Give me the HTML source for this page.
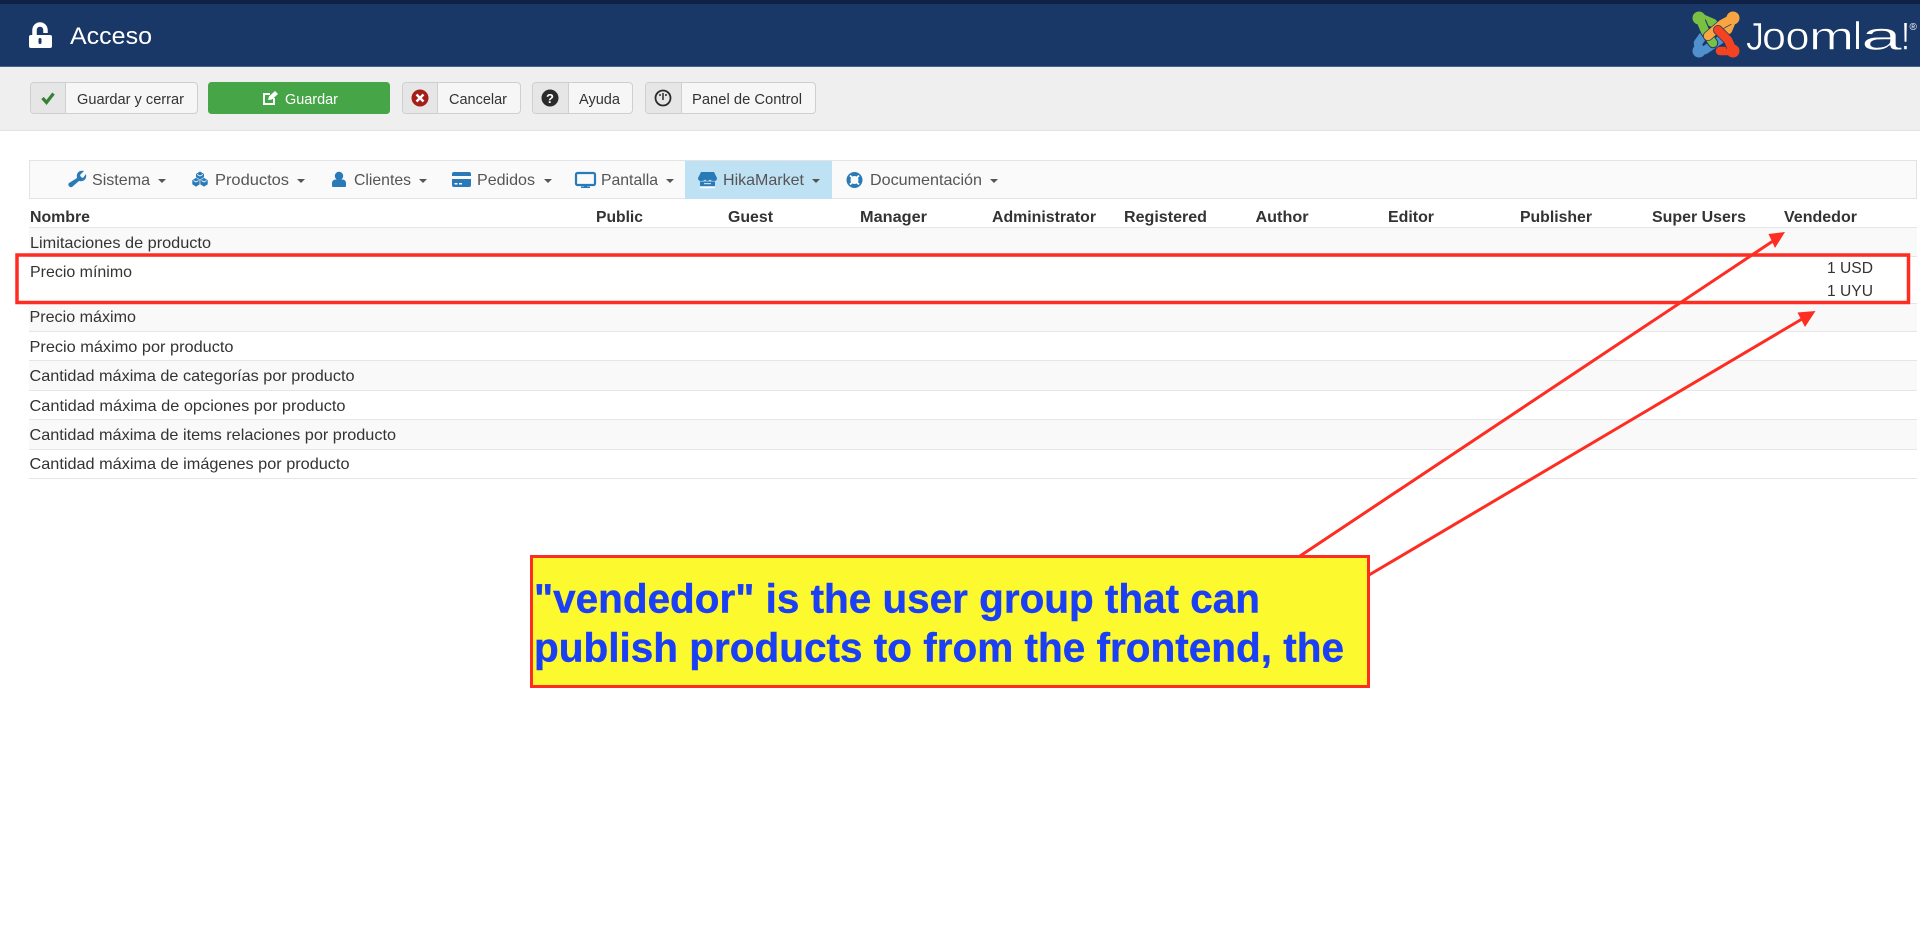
<!DOCTYPE html>
<html lang="es"><head><meta charset="utf-8"><title>Acceso</title>
<style>
html,body{margin:0;padding:0;background:#fff;width:1920px;height:925px;overflow:hidden}
svg{display:block;position:absolute;left:0;top:0}
text{font-family:"Liberation Sans",Arial,sans-serif}
.t{font-size:15.9px;fill:#333}
.h{font-size:15.9px;fill:#333;font-weight:bold}
.n{font-size:15.9px;fill:#555}
.b{font-size:14.6px;fill:#333}
.z{fill:#f9f9f9}
.l{fill:#e6e6e6}
.i{fill:#2a7ab8}
.c{fill:#555}
.btn{fill:#f6f6f6;stroke:#cfcfcf}
.ic{fill:#e6e6e6}
.j{font-size:39px;fill:#fff;stroke:#1a3867;stroke-width:.6}
</style></head><body>
<svg width="1920" height="925" viewBox="0 0 1920 925" xmlns="http://www.w3.org/2000/svg">
<!-- header -->
<rect width="1920" height="67" fill="#1a3867"/>
<rect width="1920" height="4" fill="#0f2246"/>
<rect y="66" width="1920" height="1" fill="#4a6188"/>
<rect y="67" width="1920" height="63" fill="#efefef"/>
<rect y="130" width="1920" height="1" fill="#e3e3e3"/>
<!-- lock -->
<rect x="29" y="35" width="23" height="13" rx="2" fill="#fff"/>
<path d="M34.5 36V30.5C34.5 22.500 45.500 22.500 45.500 30.5V33" fill="none" stroke="#fff" stroke-width="4.500"/>
<rect x="38.500" y="38" width="3" height="6" rx="1.500" fill="#1a3867"/>
<text x="70" y="44" font-size="24.500" fill="#fff" textLength="82" lengthAdjust="spacingAndGlyphs">Acceso</text>
<!-- logo -->
<g fill="none" stroke-linecap="round" stroke-linejoin="round" stroke-width="8.500">
<path d="M1699 17L1713 23" stroke="#7ac143"/>
<path d="M1699 51L1698 43L1703 36" stroke="#5091cd"/>
<path d="M1733 18L1728 30" stroke="#f9a541"/>
<path d="M1733 51L1720 51" stroke="#f44321"/>
<path d="M1699 51L1705 50L1720 40" stroke="#5091cd"/>
<path d="M1699 17L1705 31L1713 43" stroke="#1a3867" stroke-width="10.500"/>
<path d="M1699 17L1705 31L1713 43" stroke="#7ac143"/>
<path d="M1733 18L1722 24L1708 36" stroke="#1a3867" stroke-width="10"/>
<path d="M1733 18L1722 24L1708 36" stroke="#f9a541"/>
<path d="M1733 51L1728 40L1718 30" stroke="#1a3867" stroke-width="10"/>
<path d="M1733 51L1728 40L1718 30" stroke="#f44321"/>
</g>
<circle cx="1699" cy="18" r="6.500" fill="#7ac143"/><circle cx="1733" cy="18" r="6.500" fill="#f9a541"/>
<circle cx="1699" cy="51" r="6.500" fill="#5091cd"/><circle cx="1733" cy="51" r="6.500" fill="#f44321"/>
<text class="j" x="1746" y="49.500" textLength="18" lengthAdjust="spacingAndGlyphs">J</text>
<text class="j" x="1762" y="49.500" textLength="24" lengthAdjust="spacingAndGlyphs">o</text>
<text class="j" x="1785.500" y="49.500" textLength="24" lengthAdjust="spacingAndGlyphs">o</text>
<text class="j" x="1809" y="49.500" textLength="45" lengthAdjust="spacingAndGlyphs">m</text>
<text class="j" x="1853" y="49.500" textLength="9" lengthAdjust="spacingAndGlyphs">l</text>
<text class="j" x="1861" y="49.500" textLength="41" lengthAdjust="spacingAndGlyphs">a</text>
<text class="j" x="1901" y="49.500" textLength="9" lengthAdjust="spacingAndGlyphs">!</text>
<text x="1909.500" y="30" font-size="10" fill="#fff">®</text>
<!-- toolbar -->
<rect class="btn" x="30.500" y="82.500" width="167" height="31" rx="3.500"/>
<path class="ic" d="M31 86a3 3 0 0 1 3-3H65V113H34a3 3 0 0 1-3-3Z"/><rect x="65" y="83" width="1" height="30" fill="#cfcfcf"/>
<path d="M42.500 98L46.500 102.500L53.500 93.500" fill="none" stroke="#378137" stroke-width="3.200"/>
<text class="b" x="77" y="104" textLength="107" lengthAdjust="spacingAndGlyphs">Guardar y cerrar</text>
<rect x="208" y="82" width="182" height="32" rx="3.500" fill="#46a546"/>
<path d="M274 98V104H264V94H270" fill="none" stroke="#fff" stroke-width="2"/>
<path d="M268 100L269 96.500L275 91L278 94L272 99.500Z" fill="#fff"/>
<text x="285" y="104" font-size="14.600" fill="#fff" textLength="53" lengthAdjust="spacingAndGlyphs">Guardar</text>
<rect class="btn" x="402.500" y="82.500" width="118" height="31" rx="3.500"/>
<path class="ic" d="M403 86a3 3 0 0 1 3-3H437V113H406a3 3 0 0 1-3-3Z"/><rect x="437" y="83" width="1" height="30" fill="#cfcfcf"/>
<circle cx="420" cy="98" r="8.500" fill="#a51f18"/><path d="M416.500 94.500L423.500 101.500M423.500 94.500L416.500 101.500" stroke="#fff" stroke-width="2.400"/>
<text class="b" x="449" y="104" textLength="58" lengthAdjust="spacingAndGlyphs">Cancelar</text>
<rect class="btn" x="532.500" y="82.500" width="100" height="31" rx="3.500"/>
<path class="ic" d="M533 86a3 3 0 0 1 3-3H568V113H536a3 3 0 0 1-3-3Z"/><rect x="568" y="83" width="1" height="30" fill="#cfcfcf"/>
<circle cx="550" cy="98" r="8.500" fill="#2b2b2b"/>
<text x="550" y="103" font-size="13" font-weight="bold" fill="#fff" text-anchor="middle">?</text>
<text class="b" x="579" y="104" textLength="41" lengthAdjust="spacingAndGlyphs">Ayuda</text>
<rect class="btn" x="645.500" y="82.500" width="170" height="31" rx="3.500"/>
<path class="ic" d="M646 86a3 3 0 0 1 3-3H681V113H649a3 3 0 0 1-3-3Z"/><rect x="681" y="83" width="1" height="30" fill="#cfcfcf"/>
<circle cx="663" cy="98" r="7.500" fill="none" stroke="#2b2b2b" stroke-width="1.800"/>
<path d="M663 93V100M660 94V96M666 94V96" stroke="#2b2b2b" stroke-width="1.500"/>
<text class="b" x="692" y="104" textLength="110" lengthAdjust="spacingAndGlyphs">Panel de Control</text>
<!-- nav -->
<rect x="29.500" y="160.500" width="1887" height="38" fill="#fafafa" stroke="#e3e3e3"/>
<rect x="685" y="161" width="147" height="38" fill="#bfe1f4"/>
<path class="i" d="M77 178C76 173 79 170 84 171L80 175L81 177L83 178L86 174C87 179 84 182 79 181L72 187C70 188 67 185 69 183Z"/>
<text class="n" x="92" y="185" textLength="58" lengthAdjust="spacingAndGlyphs">Sistema</text>
<path class="c" d="M158 179H166L162 183Z"/>
<path class="i" d="M200 171.500L204 174V178.500L200 181L196 178.500V174Z"/>
<path class="i" d="M196 177.500L200 180V184.500L196 187L192 184.500V180Z" stroke="#fafafa" stroke-width=".6"/>
<path class="i" d="M204 177.500L208 180V184.500L204 187L200 184.500V180Z" stroke="#fafafa" stroke-width=".6"/>
<path d="M197 174.500L200 176L203 174.500M193.500 180.500L196 182L198.500 180.500M201.500 180.500L204 182L206.500 180.500" fill="none" stroke="#fff" stroke-width=".8"/>
<text class="n" x="215" y="185" textLength="74" lengthAdjust="spacingAndGlyphs">Productos</text>
<path class="c" d="M297 179H305L301 183Z"/>
<circle class="i" cx="339" cy="176" r="4.200"/>
<path class="i" d="M332 186V183.500Q332 179.500 336 179.500H342Q346 179.500 346 183.500V186Q346 187 345 187H333Q332 187 332 186Z"/>
<text class="n" x="354" y="185" textLength="57" lengthAdjust="spacingAndGlyphs">Clientes</text>
<path class="c" d="M419 179H427L423 183Z"/>
<rect class="i" x="452" y="172" width="19" height="15" rx="2"/>
<rect x="452" y="176" width="19" height="3" fill="#fafafa"/>
<rect x="454.500" y="183" width="3" height="1.500" fill="#fff"/><rect x="459" y="183" width="3" height="1.500" fill="#fff"/>
<text class="n" x="477" y="185" textLength="58" lengthAdjust="spacingAndGlyphs">Pedidos</text>
<path class="c" d="M544 179H552L548 183Z"/>
<rect x="576" y="173" width="19" height="12" rx="1.500" fill="none" stroke="#2a7ab8" stroke-width="2.200"/>
<path class="i" d="M584 185H587V186.500H590V188H581V186.500H584Z"/>
<text class="n" x="601" y="185" textLength="57" lengthAdjust="spacingAndGlyphs">Pantalla</text>
<path class="c" d="M666 179H674L670 183Z"/>
<path class="i" d="M701 172H714L717 178Q717 181 714 181Q711 181 710 179.500Q708.500 181 707.500 181Q706 181 705 179.500Q704 181 701 181Q698 181 698 178Z"/>
<path class="i" d="M700 181.500H715V186H700Z"/>
<rect x="700" y="187" width="15" height="1.200" fill="#fff"/>
<rect x="704" y="183" width="7" height="1.200" fill="#bfe1f4"/>
<text class="n" x="723" y="185" textLength="81" lengthAdjust="spacingAndGlyphs">HikaMarket</text>
<path class="c" d="M812 179H820L816 183Z"/>
<circle cx="854.500" cy="180" r="6" fill="none" stroke="#2a7ab8" stroke-width="4"/>
<path d="M850 175.500L852.500 178M859 175.500L856.500 178M850 184.500L852.500 182M859 184.500L856.500 182" stroke="#fff" stroke-width="1.800"/>
<text class="n" x="870" y="185" textLength="112" lengthAdjust="spacingAndGlyphs">Documentación</text>
<path class="c" d="M990 179H998L994 183Z"/>
<!-- table -->
<rect class="l" x="29" y="227" width="1888" height="1"/>
<rect class="z" x="29" y="228" width="1888" height="29"/><rect class="l" x="29" y="256" width="1888" height="1"/>
<rect class="l" x="29" y="303" width="1888" height="1"/>
<rect class="z" x="29" y="304" width="1888" height="28"/><rect class="l" x="29" y="331" width="1888" height="1"/>
<rect class="l" x="29" y="360" width="1888" height="1"/>
<rect class="z" x="29" y="361" width="1888" height="30"/><rect class="l" x="29" y="390" width="1888" height="1"/>
<rect class="l" x="29" y="419" width="1888" height="1"/>
<rect class="z" x="29" y="420" width="1888" height="29"/><rect class="l" x="29" y="449" width="1888" height="1"/>
<rect class="l" x="29" y="478" width="1888" height="1"/>
<text class="h" x="30" y="222" textLength="60" lengthAdjust="spacingAndGlyphs">Nombre</text>
<text class="h" x="596" y="222" textLength="47" lengthAdjust="spacingAndGlyphs">Public</text>
<text class="h" x="728" y="222" textLength="45" lengthAdjust="spacingAndGlyphs">Guest</text>
<text class="h" x="860" y="222" textLength="67" lengthAdjust="spacingAndGlyphs">Manager</text>
<text class="h" x="992" y="222" textLength="104" lengthAdjust="spacingAndGlyphs">Administrator</text>
<text class="h" x="1124" y="222" textLength="83" lengthAdjust="spacingAndGlyphs">Registered</text>
<text class="h" x="1255.500" y="222" textLength="53" lengthAdjust="spacingAndGlyphs">Author</text>
<text class="h" x="1388" y="222" textLength="46" lengthAdjust="spacingAndGlyphs">Editor</text>
<text class="h" x="1520" y="222" textLength="72" lengthAdjust="spacingAndGlyphs">Publisher</text>
<text class="h" x="1652" y="222" textLength="94" lengthAdjust="spacingAndGlyphs">Super Users</text>
<text class="h" x="1784" y="222" textLength="73" lengthAdjust="spacingAndGlyphs">Vendedor</text>
<text class="t" x="30" y="248" textLength="181" lengthAdjust="spacingAndGlyphs">Limitaciones de producto</text>
<text class="t" x="30" y="277" textLength="102" lengthAdjust="spacingAndGlyphs">Precio mínimo</text>
<text class="t" x="1827" y="273" textLength="46" lengthAdjust="spacingAndGlyphs">1 USD</text>
<text class="t" x="1827" y="296" textLength="46" lengthAdjust="spacingAndGlyphs">1 UYU</text>
<text class="t" x="29.500" y="322" textLength="106.500" lengthAdjust="spacingAndGlyphs">Precio máximo</text>
<text class="t" x="29.500" y="352" textLength="204" lengthAdjust="spacingAndGlyphs">Precio máximo por producto</text>
<text class="t" x="29.500" y="381" textLength="325" lengthAdjust="spacingAndGlyphs">Cantidad máxima de categorías por producto</text>
<text class="t" x="29.500" y="411" textLength="316" lengthAdjust="spacingAndGlyphs">Cantidad máxima de opciones por producto</text>
<text class="t" x="29.500" y="440" textLength="366.500" lengthAdjust="spacingAndGlyphs">Cantidad máxima de items relaciones por producto</text>
<text class="t" x="29.500" y="469" textLength="320" lengthAdjust="spacingAndGlyphs">Cantidad máxima de imágenes por producto</text>
<!-- annotations -->
<rect x="17" y="255" width="1891.500" height="47.500" fill="none" stroke="#fe2d22" stroke-width="3.500"/>
<path d="M1300 556L1773 241M1369 575L1802 319" stroke="#fe2d22" stroke-width="3" fill="none"/>
<path d="M1785 232L1768.500 234L1775 248Z" fill="#fe2d22"/>
<path d="M1815.500 311L1797.500 312.500L1805 327Z" fill="#fe2d22"/>
<rect x="531.500" y="556.500" width="837" height="130" fill="#fdf92f" stroke="#fe2d22" stroke-width="3"/>
<text x="534" y="612.500" font-size="40.500" font-weight="bold" fill="#1a3ff5" stroke="#1a3ff5" stroke-width=".4" textLength="726" lengthAdjust="spacingAndGlyphs">"vendedor" is the user group that can</text>
<text x="534" y="661.500" font-size="40.500" font-weight="bold" fill="#1a3ff5" stroke="#1a3ff5" stroke-width=".4" textLength="810" lengthAdjust="spacingAndGlyphs">publish products to from the frontend, the</text>
</svg>
</body></html>
